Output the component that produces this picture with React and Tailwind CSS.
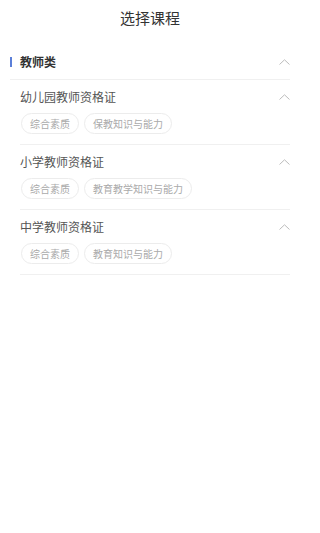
import React from 'react';

const GROUPS = [
  { name: '幼儿园教师资格证', subjects: ['综合素质', '保教知识与能力'] },
  { name: '小学教师资格证', subjects: ['综合素质', '教育教学知识与能力'] },
  { name: '中学教师资格证', subjects: ['综合素质', '教育知识与能力'] },
];

function ChevronUp() {
  return (
    <svg width="11" height="6" viewBox="0 0 11 6" fill="none" className="shrink-0">
      <path d="M0.5 5.5 L5.5 0.8 L10.5 5.5" stroke="#bcbcbc" strokeWidth="1" />
    </svg>
  );
}

function Group({ group }) {
  return (
    <div className="ml-[10px] border-b border-[#f0f0f0] pb-[10px]">
      <div className="h-[33px] flex items-center justify-between">
        <span className="text-[12px] text-[#555]">{group.name}</span>
        <ChevronUp />
      </div>
      <div className="flex gap-[5px] pl-[1px]">
        {group.subjects.map((s) => (
          <span
            key={s}
            className="h-[21px] px-[8px] flex items-center rounded-full border border-[#ececec] text-[10px] text-[#aaa]"
          >
            {s}
          </span>
        ))}
      </div>
    </div>
  );
}

export default function App() {
  return (
    <div
      className="w-[300px] min-h-[533px] bg-white"
      style={{ fontFamily: '"Noto Sans CJK SC", "Noto Sans", sans-serif' }}
    >
      <div className="h-[36px] flex items-center justify-center text-[15px] text-[#333]">
        选择课程
      </div>
      <div className="mt-[8px] px-[10px]">
        <div className="h-[36px] flex items-center justify-between border-b border-[#f0f0f0]">
          <div className="flex items-center">
            <span className="w-[2px] h-[10px] bg-[#5b7fd8]" />
            <span className="ml-[8px] text-[12px] font-bold text-[#333]">教师类</span>
          </div>
          <ChevronUp />
        </div>
        {GROUPS.map((g) => (
          <Group key={g.name} group={g} />
        ))}
      </div>
    </div>
  );
}
